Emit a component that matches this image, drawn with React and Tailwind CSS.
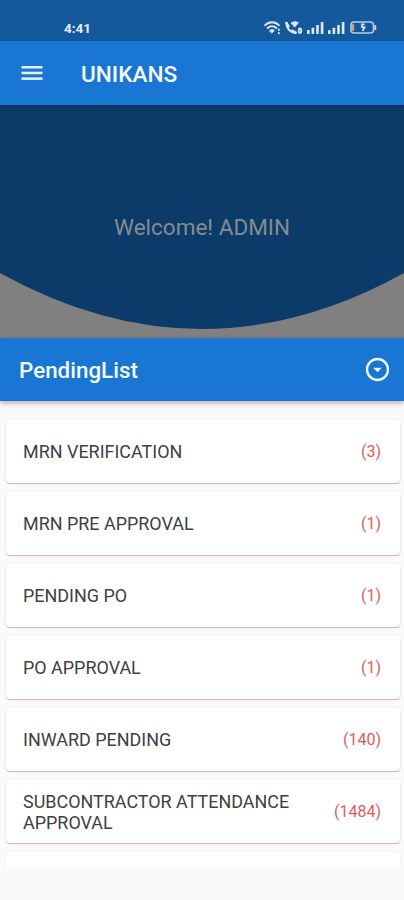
const pendingItems = [
  { title: "MRN VERIFICATION", count: 3 },
  { title: "MRN PRE APPROVAL", count: 1 },
  { title: "PENDING PO", count: 1 },
  { title: "PO APPROVAL", count: 1 },
  { title: "INWARD PENDING", count: 140 },
  { title: "SUBCONTRACTOR ATTENDANCE APPROVAL", count: 1484 },
];

const SignalIcon = () => (
  <svg width="17" height="13" viewBox="0 0 17 13" fill="#dbe9fb">
    <rect x="0" y="9" width="2.6" height="4" rx="0.6" />
    <rect x="4.6" y="6.7" width="2.6" height="6.3" rx="0.6" />
    <rect x="9.2" y="4" width="2.6" height="9" rx="0.6" />
    <rect x="13.8" y="1" width="2.6" height="12" rx="0.6" />
  </svg>
);

const StatusBar = () => (
  <div className="flex h-[41px] items-start justify-between bg-[#15599d] pt-[20px] pr-[27px] pl-[64px]">
    <span className="text-[13.5px] leading-[16px] font-bold text-[#e6f0fc]">
      4:41
    </span>
    <div className="flex items-center">
      {/* Wifi */}
      <svg width="18" height="15" viewBox="0 0 18 15" fill="none" stroke="#dbe9fb" strokeWidth="1.9" strokeLinecap="round">
        <path d="M1.2 5.2C5 1.3 11 1.3 14.8 5.2" />
        <path d="M3.6 8C6.2 5.5 9.8 5.5 12.4 8" />
        <path d="M5.7 10.6c1.3-1.3 3.3-1.3 4.6 0L8 12.8z" fill="#dbe9fb" strokeWidth="1" />
        <path d="M14.8 9.5v0.5M14.8 13v0.3" strokeWidth="2" />
      </svg>
      {/* Wifi call */}
      <svg className="ml-[3px]" width="18" height="15" viewBox="0 0 18 15" fill="none" stroke="#dbe9fb" strokeLinecap="round">
        <path d="M1.6 3c0 5.5 3.5 9.4 9 9.7" strokeWidth="2.4" />
        <path d="M1.4 3.2l2.1 3M7.5 10.7l3 1.9" strokeWidth="2.4" />
        <path d="M6.4 2.8c2.2-1.4 4.7-1.4 6.9 0L9.9 6.8z" fill="#dbe9fb" strokeWidth="1" />
        <rect x="13.8" y="8.5" width="2.4" height="4.5" rx="1.2" strokeWidth="1.8" />
      </svg>
      <div className="ml-[4px] flex gap-[4px]">
        <SignalIcon />
        <SignalIcon />
      </div>
      {/* Battery */}
      <svg className="ml-[5px]" width="27" height="13" viewBox="0 0 27 13" fill="none">
        <rect x="1" y="1" width="22.5" height="11" rx="3" stroke="#b4cdea" strokeWidth="1.6" />
        <path d="M1.8 3.2h2.4v6.6h-2.4z" fill="#c6a574" />
        <path d="M25.3 4.8v3.4" stroke="#cfe0f5" strokeWidth="1.8" strokeLinecap="round" />
        <path d="M14.5 3.4H12v3h2.6l-2 3.6" stroke="#dbe9fb" strokeWidth="1.6" />
      </svg>
    </div>
  </div>
);

const AppBar = () => (
  <header className="flex h-[64px] items-center bg-[#1976d2] pl-[21px]">
    <svg width="22" height="16" viewBox="0 0 22 16" fill="#e8f2fd">
      <rect x="0.5" y="1" width="21" height="2.5" />
      <rect x="0.5" y="6.7" width="21" height="2.5" />
      <rect x="0.5" y="12.4" width="21" height="2.5" />
    </svg>
    <h1 className="ml-[38px] pt-[3px] text-[22.6px] leading-[28px] font-medium text-[#f4f9ff]">
      UNIKANS
    </h1>
  </header>
);

const WelcomeBanner = () => (
  <section className="relative h-[233px] bg-[#808080]">
    <svg className="absolute inset-0" width="404" height="233" viewBox="0 0 404 233">
      <path d="M0 0H404V168Q202 280 0 168Z" fill="#0c3b69" />
      <rect width="404" height="1.5" fill="#092f55" />
    </svg>
    <p className="relative pt-[108px] text-center text-[22.5px] leading-[28px] text-[#858b92]">
      Welcome! ADMIN
    </p>
  </section>
);

const PendingHeader = () => (
  <div className="relative flex h-[63px] items-center justify-between bg-[#1976d2] pr-[14px] pl-[19px] shadow-[0_2px_5px_rgba(60,20,30,0.35)]">
    <h2 className="pt-[1px] text-[22.4px] leading-[28px] font-medium text-[#f4f9ff]">
      PendingList
    </h2>
    <svg width="25" height="25" viewBox="0 0 25 25">
      <circle cx="12.5" cy="12.5" r="10.5" fill="none" stroke="#f4f9ff" strokeWidth="2.3" />
      <path d="M8.2 10.8h8.6l-4.3 4.4z" fill="#f4f9ff" />
    </svg>
  </div>
);

const PendingCard = ({ title, count }) => (
  <div className="flex h-[63px] shrink-0 items-center justify-between rounded-[4px] bg-white pr-[19px] pl-[17px] shadow-[0_1px_1px_rgba(205,80,80,0.42),0_0_3px_rgba(160,60,60,0.1)]">
    <span className="w-[285px] text-[17.95px] leading-[21px] text-[#404040]">
      {title}
    </span>
    <span className="pt-px text-[16px] leading-[20px] text-[#e45a5a]">({count})</span>
  </div>
);

const App = () => {
  return (
    <div className="flex h-[900px] w-[404px] flex-col overflow-hidden bg-[#fafafa] font-['Roboto',sans-serif]">
      <StatusBar />
      <AppBar />
      <WelcomeBanner />
      <PendingHeader />
      <main className="flex h-[466px] flex-col gap-[9px] overflow-hidden pt-[19px] pr-[4px] pl-[6px]">
        {pendingItems.map((item) => (
          <PendingCard key={item.title} title={item.title} count={item.count} />
        ))}
        {/* Next card, cut off by the end of the list */}
        <div className="h-[63px] shrink-0 rounded-[4px] bg-white shadow-[0_0_3px_rgba(160,60,60,0.1)]" />
      </main>
    </div>
  );
};

export default App;
